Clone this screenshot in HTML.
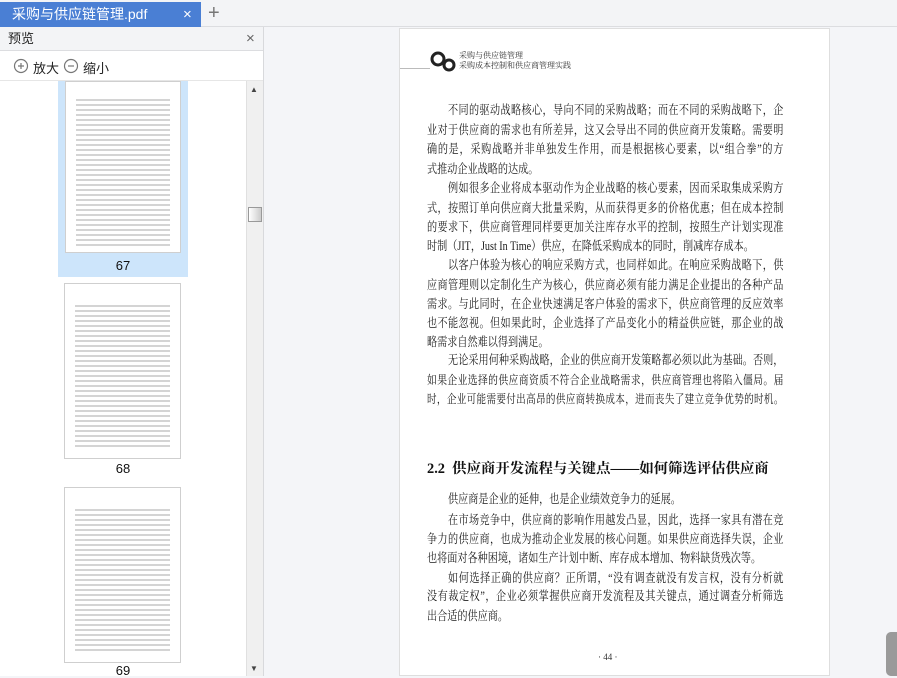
<!DOCTYPE html>
<html><head><meta charset="utf-8"><style>
*{margin:0;padding:0;box-sizing:border-box}
body{width:897px;height:676px;overflow:hidden;background:#f4f5f8;font-family:"Liberation Sans","Noto Sans CJK SC",sans-serif;position:relative}
.abs{position:absolute}
#tabbar{left:0;top:0;width:897px;height:27px;background:#f3f4f6;border-bottom:1px solid #dcdde0}
#tab{left:0;top:2px;width:201px;height:25px;background:#4a7fd4;color:#fff;font-size:14px;line-height:25px;padding-left:12px}
#side{left:0;top:27px;width:264px;height:649px;background:#fff;border-right:1px solid #d8d9dc}
#sh{left:0;top:27px;width:263px;height:24px;background:#f3f4f6;border-bottom:1px solid #dcdde0;font-size:13px;line-height:24px;padding-left:8px;color:#222}
#tool{left:0;top:51px;width:263px;height:30px;border-bottom:1px solid #e6e6e6;font-size:13px;color:#222}
#sb{left:246px;top:81px;width:17px;height:595px;background:#f0f0f0;border-left:1px solid #e0e0e0}
.th{position:absolute;background:#fff;border:1px solid #cfcfcf;overflow:hidden}
.lines{position:absolute;left:10px;right:10px;background:repeating-linear-gradient(#fff 0 3px,#d4d4d4 3px 5px)}
.num{position:absolute;width:130px;left:58px;text-align:center;font-size:13px;color:#111}
#page{left:399px;top:28px;width:431px;height:648px;background:#fff;border:1px solid #dedede}
.ln{position:absolute;left:427px;width:440px;height:20px;font-family:"Liberation Serif","Noto Serif CJK SC",serif;font-size:12.5px;line-height:20px;color:#1a1a1a;text-align:justify;text-align-last:justify;text-justify:inter-character;overflow:hidden;transform:scaleX(0.81);transform-origin:0 0}
.ln.l{text-align-last:left}
.ln.i{padding-left:26px}
</style></head><body>
<div id="tabbar" class="abs"></div>
<div id="tab" class="abs">采购与供应链管理.pdf<span style="position:absolute;left:183px;top:0;font-size:15px">×</span></div>
<div class="abs" style="left:208px;top:0;font-size:20px;line-height:27px;color:#777">+</div>
<div id="side" class="abs"></div>
<div id="sh" class="abs">预览<span style="position:absolute;left:246px;color:#666;font-size:15px">×</span></div>
<div id="tool" class="abs">
 <svg class="abs" style="left:13px;top:7px" width="16" height="16"><circle cx="8" cy="8" r="6.5" fill="none" stroke="#777" stroke-width="1.2"/><path d="M5 8h6M8 5v6" stroke="#777" stroke-width="1.2"/></svg>
 <span class="abs" style="left:33px;top:7px">放大</span>
 <svg class="abs" style="left:63px;top:7px" width="16" height="16"><circle cx="8" cy="8" r="6.5" fill="none" stroke="#777" stroke-width="1.2"/><path d="M5 8h6" stroke="#777" stroke-width="1.2"/></svg>
 <span class="abs" style="left:83px;top:7px">缩小</span>
</div>
<div class="abs" style="left:58px;top:81px;width:130px;height:196px;background:#cde5fb"></div>
<div class="th" style="left:65px;top:81px;width:116px;height:172px"><div class="lines" style="top:14px;height:150px"></div></div>
<div class="num" style="top:258px">67</div>
<div class="th" style="left:64px;top:283px;width:117px;height:176px"><div class="lines" style="top:18px;height:145px"></div></div>
<div class="num" style="top:461px">68</div>
<div class="th" style="left:64px;top:487px;width:117px;height:176px"><div class="lines" style="top:18px;height:145px"></div></div>
<div class="num" style="top:663px">69</div>
<div id="sb" class="abs"></div>
<div class="abs" style="left:250px;top:85px;font-size:8px;color:#444">▲</div>
<div class="abs" style="left:248px;top:207px;width:14px;height:15px;border:1px solid #999;background:linear-gradient(90deg,#fff,#ccc)"></div>
<div class="abs" style="left:250px;top:664px;font-size:8px;color:#444">▼</div>
<div id="page" class="abs"></div>
<div class="abs" style="left:400px;top:68px;width:30px;border-top:1px solid #bbb"></div>
<svg class="abs" style="left:428px;top:49px" width="30" height="24"><circle cx="10" cy="10" r="6" fill="none" stroke="#222" stroke-width="3"/><circle cx="21" cy="16" r="5" fill="none" stroke="#222" stroke-width="3"/></svg>
<div class="abs" style="left:459px;top:51px;font-family:'Noto Serif CJK SC',serif;font-size:8px;line-height:10px;color:#333">采购与供应链管理<br>采购成本控制和供应商管理实践</div>
<div class="ln i" style="top:100px">不同的驱动战略核心，导向不同的采购战略；而在不同的采购战略下，企</div>
<div class="ln" style="top:120px">业对于供应商的需求也有所差异，这又会导出不同的供应商开发策略。需要明</div>
<div class="ln" style="top:139px">确的是，采购战略并非单独发生作用，而是根据核心要素，以“组合拳”的方</div>
<div class="ln l" style="top:159px">式推动企业战略的达成。</div>
<div class="ln i" style="top:178px">例如很多企业将成本驱动作为企业战略的核心要素，因而采取集成采购方</div>
<div class="ln" style="top:198px">式，按照订单向供应商大批量采购，从而获得更多的价格优惠；但在成本控制</div>
<div class="ln" style="top:217px">的要求下，供应商管理同样要更加关注库存水平的控制，按照生产计划实现准</div>
<div class="ln l" style="top:236px">时制（JIT，Just In Time）供应，在降低采购成本的同时，削减库存成本。</div>
<div class="ln i" style="top:255px">以客户体验为核心的响应采购方式，也同样如此。在响应采购战略下，供</div>
<div class="ln" style="top:275px">应商管理则以定制化生产为核心，供应商必须有能力满足企业提出的各种产品</div>
<div class="ln" style="top:294px">需求。与此同时，在企业快速满足客户体验的需求下，供应商管理的反应效率</div>
<div class="ln" style="top:313px">也不能忽视。但如果此时，企业选择了产品变化小的精益供应链，那企业的战</div>
<div class="ln l" style="top:332px">略需求自然难以得到满足。</div>
<div class="ln i" style="top:350px">无论采用何种采购战略，企业的供应商开发策略都必须以此为基础。否则，</div>
<div class="ln" style="top:370px;font-size:12.1px">如果企业选择的供应商资质不符合企业战略需求，供应商管理也将陷入僵局。届</div>
<div class="ln" style="top:389px;font-size:11.8px">时，企业可能需要付出高昂的供应商转换成本，进而丧失了建立竞争优势的时机。</div>
<div class="abs" style="left:427px;top:457px;font-family:'Liberation Serif','Noto Serif CJK SC',serif;font-size:14.4px;font-weight:bold;color:#111;white-space:nowrap">2.2&nbsp; 供应商开发流程与关键点——如何筛选评估供应商</div>
<div class="ln i l" style="top:489px">供应商是企业的延伸，也是企业绩效竞争力的延展。</div>
<div class="ln i" style="top:510px">在市场竞争中，供应商的影响作用越发凸显，因此，选择一家具有潜在竞</div>
<div class="ln" style="top:529px">争力的供应商，也成为推动企业发展的核心问题。如果供应商选择失误，企业</div>
<div class="ln l" style="top:548px">也将面对各种困境，诸如生产计划中断、库存成本增加、物料缺货残次等。</div>
<div class="ln i" style="top:568px">如何选择正确的供应商？正所谓，“没有调查就没有发言权，没有分析就</div>
<div class="ln" style="top:586px">没有裁定权”，企业必须掌握供应商开发流程及其关键点，通过调查分析筛选</div>
<div class="ln l" style="top:606px">出合适的供应商。</div>
<div class="abs" style="left:598px;top:652px;font-family:'Liberation Serif',serif;font-size:9px;color:#333">· 44 ·</div>
<div class="abs" style="left:886px;top:632px;width:14px;height:44px;background:#9a9a9a;border-radius:5px 0 0 5px"></div>
</body></html>
